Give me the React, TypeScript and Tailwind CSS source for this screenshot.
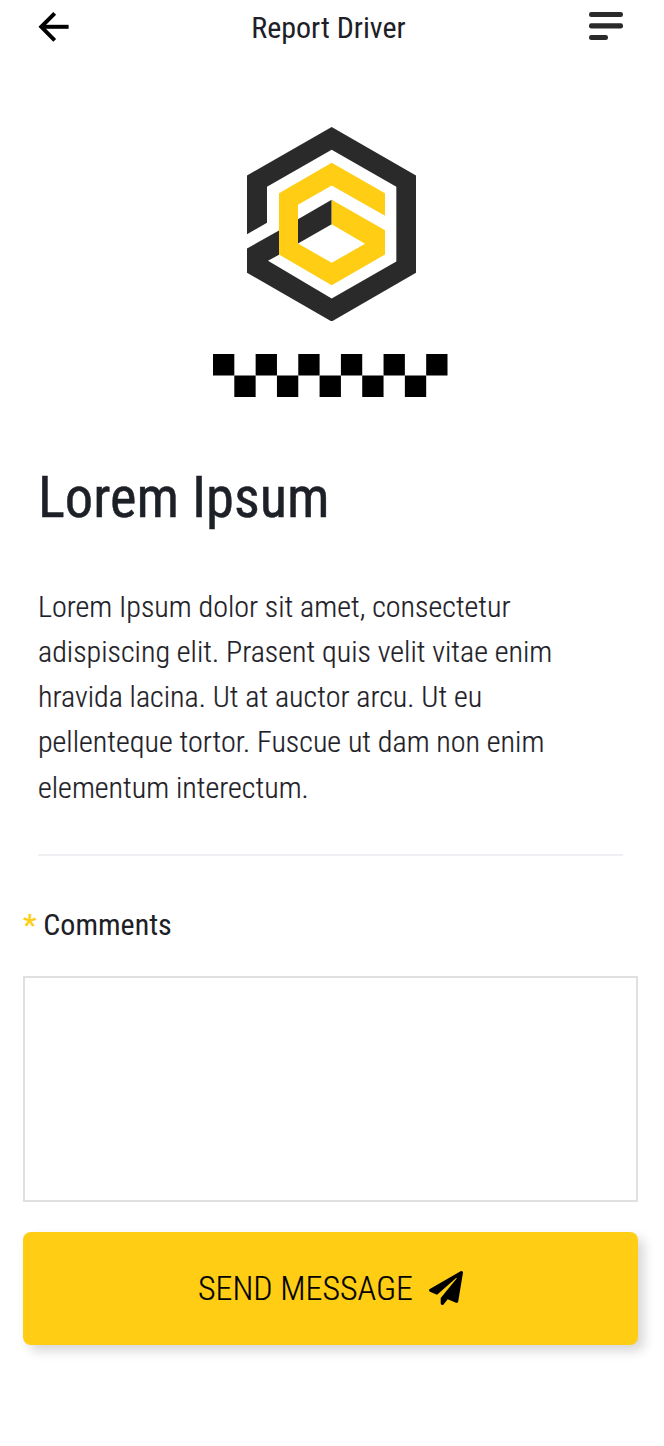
function BackArrow() {
  return (
    <svg viewBox="0 0 32 32" className="size-8" fill="none" stroke="#000" strokeWidth="4">
      <path d="M17.700 2.300 4.300 15.800l13.400 13.500" />
      <path d="M5 15.800h26.600" />
    </svg>
  );
}

function MenuIcon() {
  return (
    <svg viewBox="0 0 34 28" className="h-7 w-[34px]" fill="#2a2a2a">
      <rect x="0" y="0" width="34" height="5" rx="2.3" />
      <rect x="0" y="11.3" width="34" height="5.2" rx="2.3" />
      <rect x="0" y="23" width="19" height="5" rx="2.3" />
    </svg>
  );
}

function Logo() {
  return (
    <svg viewBox="51 49.5 507 583.5" className="h-[194.5px] w-[169px]">
      <path
        fill="#2a2a2a"
        d="M51 195 305 49.500 558 195V487L305 633 51 487V414L147 360V433L114 451 305 564 499 453V229L305 118 111 229V337L51 371Z"
      />
      <path fill="#2a2a2a" d="M204 326 305 268V341L204 399Z" />
      <path
        fill="#ffcd14"
        d="M147 248 305 157 465 248V316L305 225 204 283V399L305 457 405 400 305 341V268L465 359V432L305 524 147 432Z"
      />
    </svg>
  );
}

function CheckerStrip() {
  return (
    <svg viewBox="0 0 11 2" preserveAspectRatio="none" className="h-[43px] w-[234.5px]" fill="#000">
      {Array.from({ length: 11 }, (_, i) => (
        <rect key={i} x={i} y={i % 2} width="1" height="1" />
      ))}
    </svg>
  );
}

function PaperPlane() {
  return (
    <svg viewBox="0 0 512 512" className="size-[34px]" fill="#000">
      <path d="M476 3.2L12.5 270.6c-18.1 10.4-15.8 35.6 2.2 43.2L121 358.4l287.3-253.2c5.5-4.9 13.3 2.6 8.6 8.3L176 407v80.500c0 23.600 28.500 32.900 42.500 15.800L282 426l124.600 52.200c14.200 6 30.400-2.900 33-18.200l72-432C515 7.800 493.300-6.800 476 3.200z" />
    </svg>
  );
}

export default function App() {
  return (
    <main className="flex min-h-[1446px] w-[664px] flex-col bg-white font-['Roboto',sans-serif] font-stretch-75% text-[#1d2026]">
      <header className="grid h-[54px] grid-cols-3 items-center pr-[41px] pl-[37px]">
        <button aria-label="Back" className="-mt-px justify-self-start">
          <BackArrow />
        </button>
        <h1 className="mr-[3px] justify-self-center text-[30px] whitespace-nowrap">Report Driver</h1>
        <button aria-label="Menu" className="-mt-0.5 justify-self-end">
          <MenuIcon />
        </button>
      </header>

      <div className="flex flex-col items-center pt-[72.500px]">
        <div className="pr-px">
          <Logo />
        </div>
        <div className="pt-[33px] pr-[3px]">
          <CheckerStrip />
        </div>
      </div>

      <section className="mr-[41.500px] ml-[38px] border-b-2 border-[#efeff4] pb-[44px]">
        <h2 className="pt-[65px] text-[56.500px] leading-[72px] font-normal [-webkit-text-stroke:0.5px_#1d2026]">
          Lorem Ipsum
        </h2>
        <p className="pt-[49.700px] text-[30.050px] leading-[45.200px] font-light [-webkit-text-stroke:0.2px_#1d2026]">
          Lorem Ipsum dolor sit amet, consectetur
          <br />
          adispiscing elit. Prasent quis velit vitae enim
          <br />
          hravida lacina. Ut at auctor arcu. Ut eu
          <br />
          pellenteque tortor. Fuscue ut dam non enim
          <br />
          elementum interectum.
        </p>
      </section>

      <form className="flex flex-col pt-[46px] pr-[26px] pl-[23px]" onSubmit={(e) => e.preventDefault()}>
        <label htmlFor="comments" className="text-[30px] leading-[45px]">
          <span className="font-semibold text-[#ffcd14]">*</span> Comments
        </label>
        <textarea
          id="comments"
          className="mt-[29.300px] h-[226px] resize-none border-2 border-[#e0e0e0] p-4 text-[30px] outline-none"
        />
        <button
          type="submit"
          className="mt-[30px] flex h-[112.500px] items-center justify-center gap-4 rounded-lg bg-[#ffcd14] text-[33.900px] font-light text-black shadow-[6px_6px_12px_rgba(0,0,0,0.16)]"
        >
          <span className="pt-[3px] [-webkit-text-stroke:0.2px_#000]">SEND MESSAGE</span>
          <PaperPlane />
        </button>
      </form>
    </main>
  );
}
